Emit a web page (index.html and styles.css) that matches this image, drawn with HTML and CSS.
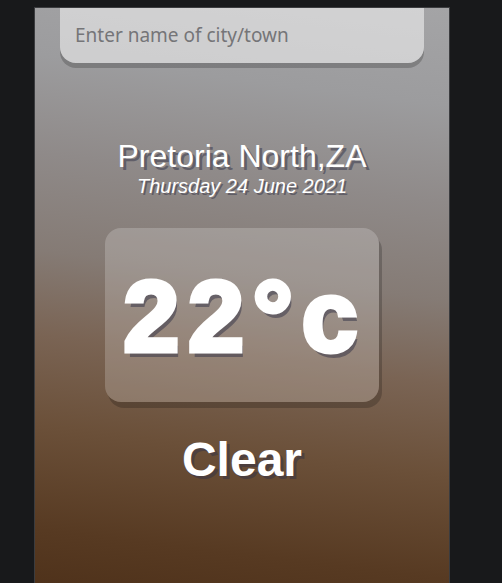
FILE: index.html
```
<!DOCTYPE html>
<html>
<head>
<meta charset="utf-8">
<link rel="stylesheet" href="styles.css">
</head>
<body>
<div class="app">
  <main class="main">
    <div class="search-box">
      <input class="search-bar" type="text" placeholder="Enter name of city/town">
    </div>
    <div class="location-box">
      <div class="location">Pretoria North,ZA</div>
      <div class="date">Thursday 24 June 2021</div>
    </div>
    <div class="weather-box">
      <div class="temp">22°c</div>
      <div class="weather">Clear</div>
    </div>
  </main>
</div>
</body>
</html>
```
FILE: styles.css
```
* { box-sizing: border-box; }
html, body { margin: 0; padding: 0; }
body {
  background: #18191b;
  height: 583px;
  overflow: hidden;
  font-family: "Liberation Sans", Arial, sans-serif;
}
.app {
  margin: 7px 0 0 34px;
  width: 416px;
  height: 600px;
  border: 1px solid #3b3c3f;
  border-bottom: none;
  background: linear-gradient(187deg, #a4a4a6 0%, #9c9c9e 15%, #8f8a89 30%, #857b75 45%, #7a6454 58%, #6b5039 72%, #573a22 88%, #4c2f18 100%);
}
.main {
  padding: 25px;
}
.search-box {
  margin-bottom: 75px;
}
.search-bar {
  display: block;
  width: 100%;
  padding: 15px;
  appearance: none;
  border: none;
  outline: none;
  background-color: rgba(255,255,255,0.5);
  border-radius: 0 0 16px 16px;
  margin-top: -25px;
  box-shadow: 0 5px rgba(0,0,0,0.2);
  color: #313131;
  font-family: "Noto Sans", sans-serif;
  font-size: 19px;
  line-height: 25px;
}
.search-bar::placeholder { color: #757578; }
.location-box .location {
  color: #fff;
  font-size: 32px;
  font-weight: 500;
  text-align: center;
  text-shadow: 3px 3px rgba(50,50,70,0.5);
}
.location-box .date {
  color: #fff;
  font-size: 20px;
  font-style: italic;
  text-align: center;
  text-shadow: 2px 2px rgba(50,50,70,0.5);
}
.weather-box { text-align: center; }
.weather-box .temp {
  display: inline-block;
  width: 274px;
  height: 174px;
  padding: 30px 0 0 6px;
  color: #fff;
  font-size: 100px;
  line-height: 117px;
  font-weight: 700;
  letter-spacing: 9px;
  -webkit-text-stroke: 5px #fff;
  text-shadow: 3px 6px rgba(50,50,70,0.5);
  background-color: rgba(255,255,255,0.2);
  border-radius: 16px;
  margin: 30px 0;
  box-shadow: 3px 6px rgba(0,0,0,0.2);
}
.weather-box .weather {
  color: #fff;
  font-size: 48px;
  font-weight: 700;
  text-shadow: 3px 3px rgba(50,50,70,0.5);
}
```
